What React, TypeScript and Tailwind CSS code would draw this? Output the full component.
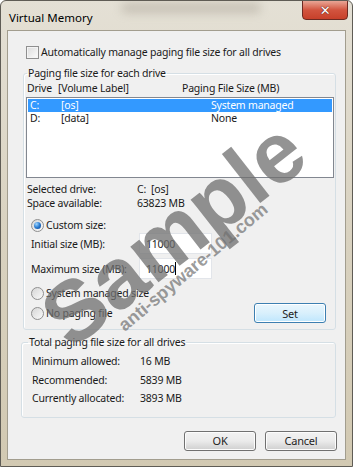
import React from "react";

const font = "font-['Noto_Sans',sans-serif]";

function Checkbox() {
  return (
    <span className="inline-block w-[13px] h-[13px] border border-[#8f8f8f] bg-linear-to-br from-[#dcdcdc] to-[#fbfbfb] shadow-[inset_0_0_0_1px_#f4f4f4]" />
  );
}

function Radio({ checked }: { checked?: boolean }) {
  return (
    <span className="inline-flex items-center justify-center w-[13px] h-[13px] rounded-full border border-[#8f8f8f] bg-linear-to-br from-[#d6d6d6] to-[#fafafa]">
      {checked && (
        <span className="w-[7px] h-[7px] rounded-full bg-radial-[at_35%_30%] from-[#9fd6ff] via-[#2a7bd0] to-[#0b3f8a]" />
      )}
    </span>
  );
}

function Button({ label, focused }: { label: string; focused?: boolean }) {
  return (
    <button
      className={
        "w-[72px] h-[20px] rounded-[3px] border text-[11px] leading-none text-[#1e1e1e] " +
        (focused
          ? "border-[#3c7fb1] bg-linear-to-b from-[#eaf6fd] via-[#d9f0fc] to-[#bee6fd] shadow-[inset_0_0_0_1px_#fff]"
          : "border-[#707070] bg-linear-to-b from-[#f2f2f2] via-[#ebebeb] to-[#cfcfcf] shadow-[inset_0_0_0_1px_#fcfcfc]")
      }
    >
      {label}
    </button>
  );
}

function SizeInput({ value, caret }: { value: string; caret?: boolean }) {
  return (
    <div className="w-[73px] h-[21px] bg-white border border-[#e2e5ea] flex items-center pl-[6px]">
      <span>{value}</span>
      {caret && <span className="w-px h-[13px] bg-black" />}
    </div>
  );
}

export default function App() {
  return (
    <div
      className={`${font} relative w-[353px] h-[467px] overflow-hidden flex flex-col rounded-t-[6px] border border-[#5f5c55] bg-linear-to-b from-[#e4e0d5] via-[#d9d2c0] to-[#d2c9b2] text-[10.5px] leading-[14px] tracking-[-0.2px] text-[#1a1a1a]`}
    >
      {/* title bar */}
      <div className="relative h-[29px] flex items-start justify-between pl-[8px]">
        <div className="absolute left-[120px] top-[2px] w-[140px] h-[10px] rounded-full bg-[#9a9488]/40 blur-[5px]" />
        <span className="relative mt-[9px] text-[11.5px] leading-[16px] tracking-normal text-black">Virtual Memory</span>
        <div className="relative mr-[4px] w-[46px] h-[20px] -mt-px rounded-b-[4px] border border-[#6d2a22] bg-linear-to-b from-[#e8a596] via-[#d2543f] to-[#c7402a] flex items-center justify-center">
          <span className="text-white font-['DejaVu_Sans',sans-serif] font-bold text-[13px] leading-none [text-shadow:0_0_1px_#5a1a10,0_0_1px_#5a1a10]">
            ✕
          </span>
        </div>
      </div>

      {/* client area */}
      <div className="mx-[6px] h-[430px] border border-[#a29d8e] bg-[#f0f0f0] flex flex-col">
        <div className="mt-[14px] ml-[18px] flex items-center gap-[2px]">
          <Checkbox />
          <span>Automatically manage paging file size for all drives</span>
        </div>

        <fieldset className="mt-[7px] ml-[15px] w-[313px] border border-[#d5dfe5] rounded-[3px] pb-[6px] shadow-[inset_1px_1px_0_#fff]">
          <legend className="ml-[3px] px-[1px]">Paging file size for each drive</legend>
          <div className="mt-px flex pl-[3px]">
            <span className="w-[31px]">Drive</span>
            <span className="w-[124px]">[Volume Label]</span>
            <span>Paging File Size (MB)</span>
          </div>
          <div className="mt-[2px] ml-[2px] w-[308px] h-[81px] border border-[#828790] bg-white p-px leading-[13px]">
            <div className="flex h-[13px] items-center bg-[#3399ff] text-white pl-[2px]">
              <span className="w-[31px]">C:</span>
              <span className="w-[150px]">[os]</span>
              <span>System managed</span>
            </div>
            <div className="flex h-[13px] items-center pl-[2px]">
              <span className="w-[31px]">D:</span>
              <span className="w-[150px]">[data]</span>
              <span>None</span>
            </div>
          </div>
          <div className="mt-[4px] pl-[3px]">
            <div className="flex">
              <span className="w-[110px]">Selected drive:</span>
              <span>C:&nbsp; [os]</span>
            </div>
            <div className="flex">
              <span className="w-[110px]">Space available:</span>
              <span>63823 MB</span>
            </div>
          </div>
          <div className="mt-[8px] ml-[7px] flex items-center gap-[2px]">
            <Radio checked />
            <span>Custom size:</span>
          </div>
          <div className="mt-px ml-[7px] flex items-center">
            <span className="w-[108px]">Initial size (MB):</span>
            <SizeInput value="11000" />
          </div>
          <div className="mt-[4px] ml-[7px] flex items-center">
            <span className="w-[108px]">Maximum size (MB):</span>
            <SizeInput value="11000" caret />
          </div>
          <div className="mt-[7px] ml-[7px] flex items-center gap-[2px]">
            <Radio />
            <span>System managed size</span>
          </div>
          <div className="mt-[3px] ml-[7px] mr-[9px] flex items-center justify-between">
            <div className="flex items-center gap-[2px]">
              <Radio />
              <span>No paging file</span>
            </div>
            <Button label="Set" focused />
          </div>
        </fieldset>

        <fieldset className="mt-[5px] ml-[13px] w-[315px] border border-[#d5dfe5] rounded-[3px] pb-[9px] shadow-[inset_1px_1px_0_#fff]">
          <legend className="ml-[6px] px-[1px]">Total paging file size for all drives</legend>
          <div className="mt-[3px] pl-[10px] leading-[18.5px]">
            <div className="flex">
              <span className="w-[108px]">Minimum allowed:</span>
              <span>16 MB</span>
            </div>
            <div className="flex">
              <span className="w-[108px]">Recommended:</span>
              <span>5839 MB</span>
            </div>
            <div className="flex">
              <span className="w-[108px]">Currently allocated:</span>
              <span>3893 MB</span>
            </div>
          </div>
        </fieldset>

        <div className="mt-[13px] mr-[8px] flex justify-end gap-[9px]">
          <Button label="OK" />
          <Button label="Cancel" />
        </div>
      </div>

      {/* watermark */}
      <div className="pointer-events-none absolute left-[172px] top-[232px] -translate-x-1/2 -translate-y-1/2 -rotate-[38deg] whitespace-nowrap font-['Liberation_Sans',sans-serif] font-bold text-[86px] leading-none tracking-normal text-[#6f6f6f]/75">
        Sample
      </div>
      <div className="pointer-events-none absolute left-[192px] top-[266px] -translate-x-1/2 -translate-y-1/2 -rotate-[40deg] whitespace-nowrap font-['Liberation_Sans',sans-serif] font-bold text-[18px] leading-none tracking-normal text-[#6f6f6f]/70">
        anti-spyware-101.com
      </div>
    </div>
  );
}
